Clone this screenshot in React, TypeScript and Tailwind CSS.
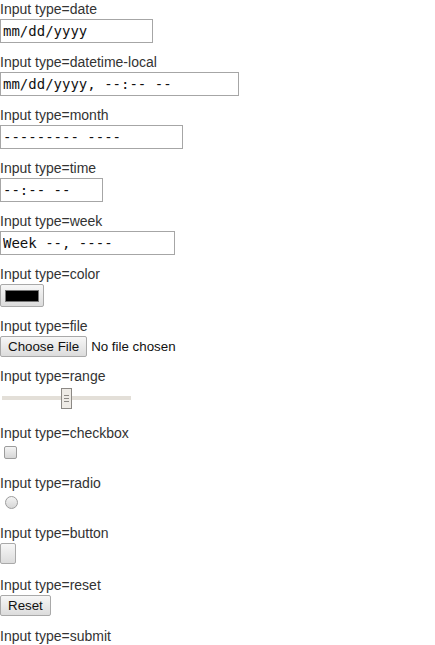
const label = "block h-[19px] leading-[19px] text-[14px] text-[#333]";
const field =
  "block h-[24px] border border-[#a6a6a6] bg-white px-[2px] font-['DejaVu_Sans_Mono',monospace] text-[14px] leading-[22px] text-[#111] outline-none";
const btn =
  "flex w-fit items-center justify-center h-[21px] rounded-[2px] border border-[#a9a9a9] bg-gradient-to-b from-[#f7f7f7] to-[#dcdcdc] px-[7px] text-[13.33px] leading-none text-[#111]";

function TextLike({ type, value, width }: { type: string; value: string; width: string }) {
  return (
    <div className="mb-[10px]">
      <span className={label}>Input type={type}</span>
      <input readOnly value={value} className={`${field} ${width}`} />
    </div>
  );
}

export default function App() {
  return (
    <div className="w-[435px] h-[645px] overflow-hidden bg-white font-['Liberation_Sans',Arial,sans-serif]">
      <TextLike type="date" value="mm/dd/yyyy" width="w-[153px]" />
      <TextLike type="datetime-local" value="mm/dd/yyyy, --:-- --" width="w-[239px]" />
      <TextLike type="month" value="--------- ----" width="w-[183px]" />
      <TextLike type="time" value="--:-- --" width="w-[103px]" />
      <TextLike type="week" value="Week --, ----" width="w-[175px]" />

      <div className="mb-[10px]">
        <span className={label}>Input type=color</span>
        <div className="flex h-[23px] w-[44px] items-center justify-center rounded-[2px] border border-[#a9a9a9] bg-gradient-to-b from-[#f7f7f7] to-[#dcdcdc]">
          <div className="h-[12px] w-[34px] border border-[#777] bg-black" />
        </div>
      </div>

      <div className="mb-[10px]">
        <span className={label}>Input type=file</span>
        <div className="flex items-center gap-[4px] text-[14px] text-[#111]">
          <span className={btn}>Choose File</span>
          <span className="text-[13.33px]">No file chosen</span>
        </div>
      </div>

      <div className="mb-[15px]">
        <span className={label}>Input type=range</span>
        <div className="relative mx-[2px] mt-[2px] h-[21px] w-[129px]">
          <div className="absolute left-0 right-0 top-[8px] h-[4px] bg-[#e3dfd8]" />
          <div className="absolute left-[59px] top-0 flex h-[21px] w-[11px] flex-col items-center justify-center gap-[2px] border border-[#8c8985] bg-[#eeebe6]">
            <span className="h-px w-[5px] bg-[#8c8985]" />
            <span className="h-px w-[5px] bg-[#8c8985]" />
            <span className="h-px w-[5px] bg-[#8c8985]" />
          </div>
        </div>
      </div>

      <div className="mb-[12px]">
        <span className={label}>Input type=checkbox</span>
        <div className="ml-[4px] mt-[3px] h-[13px] w-[13px] rounded-[2px] border border-[#9c9c9c] bg-gradient-to-b from-[#f4f4f4] to-[#d6d6d6]" />
        <div className="h-[3px]" />
      </div>

      <div className="mb-[12px]">
        <span className={label}>Input type=radio</span>
        <div className="ml-[5px] mt-[3px] h-[13px] w-[13px] rounded-full border border-[#9c9c9c] bg-gradient-to-b from-[#f4f4f4] to-[#d6d6d6]" />
        <div className="h-[3px]" />
      </div>

      <div className="mb-[12px]">
        <span className={label}>Input type=button</span>
        <span className={`${btn} w-[16px] px-0`} />
      </div>

      <div className="mb-[11px]">
        <span className={label}>Input type=reset</span>
        <span className={btn}>Reset</span>
      </div>

      <div>
        <span className={label}>Input type=submit</span>
        <span className={btn}>Submit</span>
      </div>
    </div>
  );
}
